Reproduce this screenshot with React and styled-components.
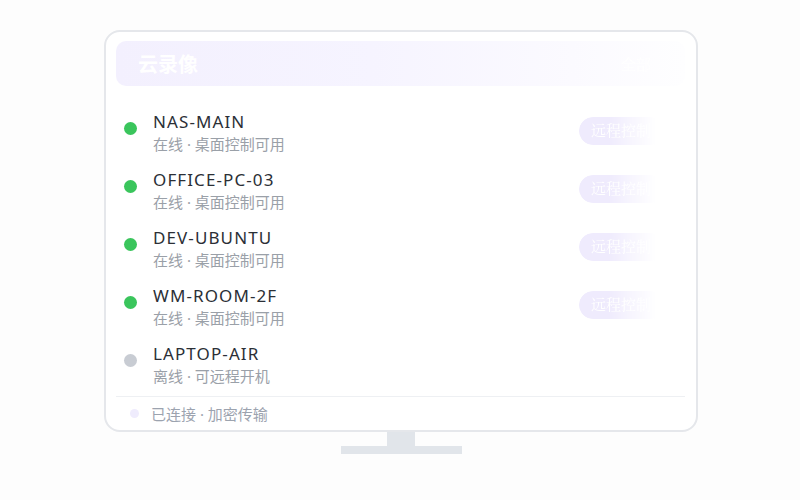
import React from 'react';
import styled, { createGlobalStyle } from 'styled-components';

const GlobalStyle = createGlobalStyle`
  html, body {
    margin: 0;
    padding: 0;
    background: #fdfdfd;
  }
  body {
    font-family: "Noto Sans", "Noto Sans CJK SC", sans-serif;
  }
`;

const devices = [
  { name: 'NAS-MAIN', online: true },
  { name: 'OFFICE-PC-03', online: true },
  { name: 'DEV-UBUNTU', online: true },
  { name: 'WM-ROOM-2F', online: true },
  { name: 'LAPTOP-AIR', online: false },
];

export default function App() {
  return (
    <Page>
      <GlobalStyle />
      <Monitor>
        <Screen>
          <Header>
            <Title>云录像</Title>
            <HeaderAction>全部</HeaderAction>
          </Header>
          <List>
            {devices.map((d) => (
              <Row key={d.name}>
                <Dot online={d.online} />
                <Info>
                  <Name>{d.name}</Name>
                  <Sub>{d.online ? '在线 · 桌面控制可用' : '离线 · 可远程开机'}</Sub>
                </Info>
                {d.online && <RemoteButton>远程控制</RemoteButton>}
              </Row>
            ))}
          </List>
          <Footer>
            <FooterDot />
            <FooterText>已连接 · 加密传输</FooterText>
          </Footer>
        </Screen>
        <Neck />
        <Base />
      </Monitor>
    </Page>
  );
}

const Page = styled.div`
  width: 800px;
  height: 500px;
  padding: 30px 0 0 104px;
  box-sizing: border-box;
`;
const Monitor = styled.div`
  width: 594px;
  display: flex;
  flex-direction: column;
  align-items: center;
`;
const Screen = styled.div`
  width: 594px;
  height: 402px;
  box-sizing: border-box;
  border: 2px solid #e5e7eb;
  border-radius: 16px;
  background: #fff;
  padding: 9px 11px 0 10px;
  display: flex;
  flex-direction: column;
  overflow: hidden;
`;
const Header = styled.div`
  height: 45px;
  border-radius: 10px;
  background: linear-gradient(90deg, #f3f0fe 0%, #f6f4ff 45%, #fbfaff 80%, #fefeff 100%);
  display: flex;
  align-items: center;
  justify-content: space-between;
  padding: 0 22px;
  flex-shrink: 0;
`;
const Title = styled.div`
  color: #fff;
  font-size: 20px;
  font-weight: 700;
  line-height: 1;
  margin-top: 2px;
`;
const HeaderAction = styled.div`
  color: #fff;
  font-size: 15px;
  margin-right: 12px;
  opacity: 0.9;
`;
const List = styled.div`
  display: flex;
  flex-direction: column;
  gap: 14px;
  padding-top: 25px;
`;
const Row = styled.div`
  display: flex;
  align-items: flex-start;
  padding-left: 8px;
`;
const Dot = styled.span`
  width: 13px;
  height: 13px;
  border-radius: 50%;
  background: ${(p) => (p.online ? '#3ac55c' : '#c8ccd3')};
  margin-top: 11px;
  flex-shrink: 0;
`;
const Info = styled.div`
  margin-left: 16px;
  flex: 1;
  display: flex;
  flex-direction: column;
`;
const Name = styled.div`
  font-size: 17px;
  line-height: 22px;
  color: #2b2f36;
  letter-spacing: 1.1px;
`;
const Sub = styled.div`
  font-size: 15px;
  line-height: 22px;
  color: #9aa0a8;
`;
const RemoteButton = styled.div`
  margin-top: 6px;
  margin-right: 20px;
  height: 28px;
  padding: 0 14px 0 12px;
  border-radius: 14px;
  background: #efebfd;
  color: #fff;
  font-family: "Liberation Serif", "Noto Serif CJK SC", serif;
  font-size: 15px;
  line-height: 28px;
  -webkit-mask-image: linear-gradient(90deg, #000 35%, rgba(0, 0, 0, 0.5) 60%, transparent 90%);
  mask-image: linear-gradient(90deg, #000 35%, rgba(0, 0, 0, 0.5) 60%, transparent 90%);
`;
const Footer = styled.div`
  margin-top: auto;
  height: 33px;
  border-top: 1px solid #eef0f3;
  display: flex;
  align-items: center;
  padding-left: 14px;
  flex-shrink: 0;
`;
const FooterDot = styled.span`
  width: 9px;
  height: 9px;
  border-radius: 50%;
  background: #efecfd;
`;
const FooterText = styled.span`
  margin-left: 12px;
  font-size: 15px;
  color: #9ca3af;
`;
const Neck = styled.div`
  width: 28px;
  height: 14px;
  background: #e1e5ea;
`;
const Base = styled.div`
  width: 121px;
  height: 8px;
  background: #e1e5ea;
`;
